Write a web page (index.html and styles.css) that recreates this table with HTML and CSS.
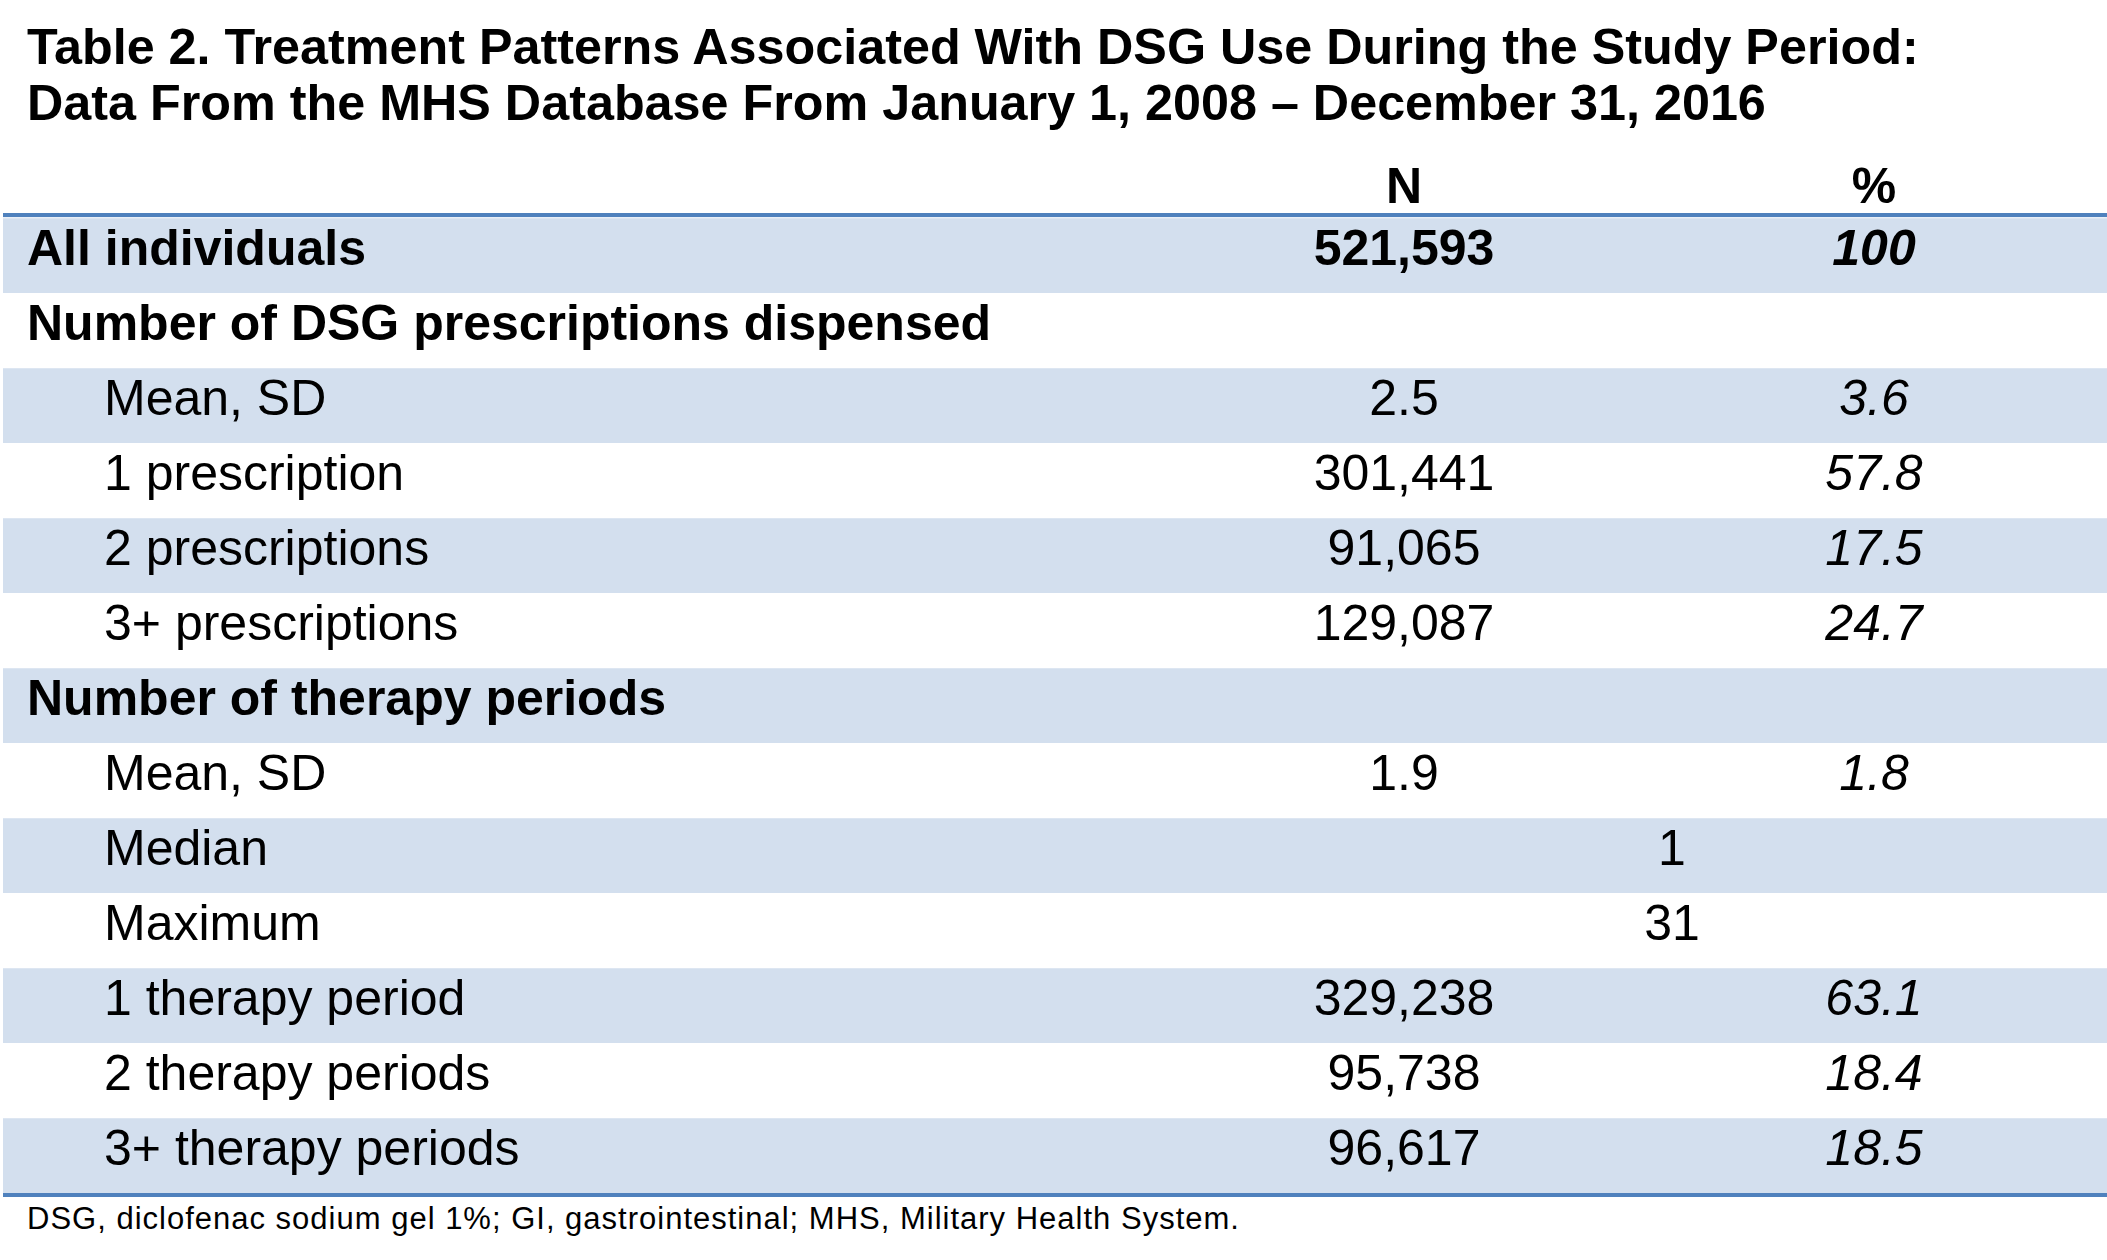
FILE: index.html
```html
<!DOCTYPE html>
<html lang="en">
<head>
<meta charset="utf-8">
<title>Table 2</title>
<link rel="stylesheet" href="styles.css">
</head>
<body>
<div class="page">
  <h1 class="title">Table 2. Treatment Patterns Associated With DSG Use During the Study Period:<br>Data From the MHS Database From January 1, 2008 – December 31, 2016</h1>
  <div class="head grid">
    <div></div>
    <div class="num b">N</div>
    <div class="num b">%</div>
  </div>
  <div class="body">
    <div class="row grid shade"><div class="lbl b">All individuals</div><div class="num b">521,593</div><div class="num b i">100</div></div>
    <div class="row grid"><div class="lbl b">Number of DSG prescriptions dispensed</div><div></div><div></div></div>
    <div class="row grid shade"><div class="lbl ind">Mean, SD</div><div class="num">2.5</div><div class="num i">3.6</div></div>
    <div class="row grid"><div class="lbl ind">1 prescription</div><div class="num">301,441</div><div class="num i">57.8</div></div>
    <div class="row grid shade"><div class="lbl ind">2 prescriptions</div><div class="num">91,065</div><div class="num i">17.5</div></div>
    <div class="row grid"><div class="lbl ind">3+ prescriptions</div><div class="num">129,087</div><div class="num i">24.7</div></div>
    <div class="row grid shade"><div class="lbl b">Number of therapy periods</div><div></div><div></div></div>
    <div class="row grid"><div class="lbl ind">Mean, SD</div><div class="num">1.9</div><div class="num i">1.8</div></div>
    <div class="row grid shade"><div class="lbl ind">Median</div><div class="num span">1</div></div>
    <div class="row grid"><div class="lbl ind">Maximum</div><div class="num span">31</div></div>
    <div class="row grid shade"><div class="lbl ind">1 therapy period</div><div class="num">329,238</div><div class="num i">63.1</div></div>
    <div class="row grid"><div class="lbl ind">2 therapy periods</div><div class="num">95,738</div><div class="num i">18.4</div></div>
    <div class="row grid shade"><div class="lbl ind">3+ therapy periods</div><div class="num">96,617</div><div class="num i">18.5</div></div>
  </div>
  <p class="foot">DSG, diclofenac sodium gel 1%; GI, gastrointestinal; MHS, Military Health System.</p>
</div>
</body>
</html>
```

FILE: styles.css
```css
html, body {
  margin: 0;
  padding: 0;
  background: #ffffff;
  overflow: hidden;
}
body {
  font-family: "Liberation Sans", Arial, sans-serif;
  color: #000000;
}
.page {
  width: 2139px;
  padding-left: 3px;
}
.title {
  margin: 19px 0 0 0;
  padding-left: 24px;
  font-size: 50.3px;
  line-height: 56px;
  font-weight: bold;
}
.grid {
  display: grid;
  grid-template-columns: 1199px 404px 536px;
  font-size: 50px;
  line-height: 50px;
}
.head {
  height: 82px;
  box-sizing: border-box;
  padding-top: 30px;
}
.body {
  border-top: 4px solid #4f81bd;
  border-bottom: 4px solid #4f81bd;
  padding-top: 1px;
  background: #e9eff7;
}
.row {
  height: 75px;
  box-sizing: border-box;
  padding-top: 5px;
  background: #ffffff;
}
.row.shade {
  background: #d3dfee;
  box-shadow: inset 0 1px 0 #dde6f2;
}
.lbl {
  padding-left: 24px;
  white-space: nowrap;
}
.lbl.ind {
  padding-left: 101px;
}
.num {
  text-align: center;
  white-space: nowrap;
}
.span {
  grid-column: 2 / 4;
}
.b {
  font-weight: bold;
}
.i {
  font-style: italic;
}
.foot {
  margin: 5px 0 0 0;
  padding-left: 24px;
  font-size: 31px;
  line-height: 34px;
  letter-spacing: 1px;
  white-space: nowrap;
}
```
